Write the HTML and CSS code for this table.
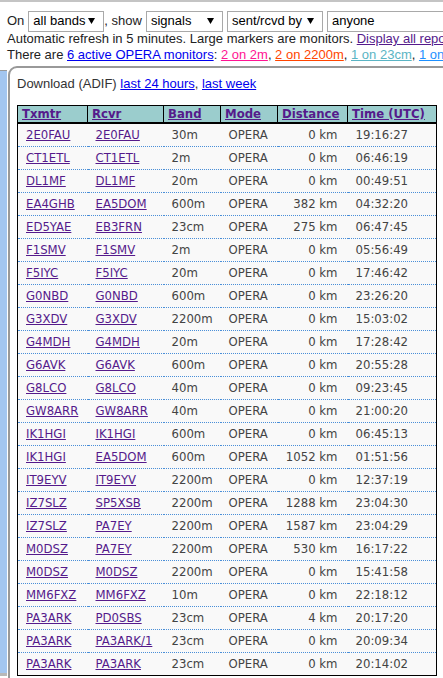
FILE: index.html
```html
<!DOCTYPE html>
<html>
<head>
<meta charset="utf-8">
<title>OPERA reports</title>
<link rel="stylesheet" href="styles.css">
</head>
<body>
<div class="page">
  <div class="top">
    <div class="controls">
      <span>On</span>
      <span class="sel w-bands">all bands<svg class="arr" width="7" height="6" viewBox="0 0 7 6"><path d="M0 0H7L3.5 6Z"/></svg></span><span class="comma">, show</span>
      <span class="sel w-show">signals<svg class="arr" width="7" height="6" viewBox="0 0 7 6"><path d="M0 0H7L3.5 6Z"/></svg></span>
      <span class="sel w-by">sent/rcvd by<svg class="arr" width="7" height="6" viewBox="0 0 7 6"><path d="M0 0H7L3.5 6Z"/></svg></span>
      <span class="inp">anyone</span>
    </div>
    <div class="line">Automatic refresh in 5 minutes. Large markers are monitors. <a class="visited" href="#">Display all reports</a></div>
    <div class="line">There are <a class="blue" href="#">6 active OPERA monitors</a>: <a class="c2m" href="#">2 on 2m</a>, <a class="c2200" href="#">2 on 2200m</a>, <a class="c23" href="#">1 on 23cm</a>, <a class="c600" href="#">1 on 600m</a></div>
  </div>
  <div class="main">
    <div class="side"></div>
    <div class="box">
      <div class="dl">Download (ADIF) <a class="blue" href="#">last 24 hours</a>, <a class="blue" href="#">last week</a></div>
      <table class="spots">
        <colgroup><col class="c1"><col class="c2"><col class="c3"><col class="c4"><col class="c5"><col class="c6"></colgroup>
        <thead>
          <tr><th><a href="#">Txmtr</a></th><th><a href="#">Rcvr</a></th><th><a href="#">Band</a></th><th><a href="#">Mode</a></th><th><a href="#">Distance</a></th><th><a href="#">Time (UTC)</a></th></tr>
        </thead>
        <tbody>
          <tr><td><a href="#">2E0FAU</a></td><td><a href="#">2E0FAU</a></td><td>30m</td><td>OPERA</td><td class="num">0 km</td><td>19:16:27</td></tr>
          <tr><td><a href="#">CT1ETL</a></td><td><a href="#">CT1ETL</a></td><td>2m</td><td>OPERA</td><td class="num">0 km</td><td>06:46:19</td></tr>
          <tr><td><a href="#">DL1MF</a></td><td><a href="#">DL1MF</a></td><td>20m</td><td>OPERA</td><td class="num">0 km</td><td>00:49:51</td></tr>
          <tr><td><a href="#">EA4GHB</a></td><td><a href="#">EA5DOM</a></td><td>600m</td><td>OPERA</td><td class="num">382 km</td><td>04:32:20</td></tr>
          <tr><td><a href="#">ED5YAE</a></td><td><a href="#">EB3FRN</a></td><td>23cm</td><td>OPERA</td><td class="num">275 km</td><td>06:47:45</td></tr>
          <tr><td><a href="#">F1SMV</a></td><td><a href="#">F1SMV</a></td><td>2m</td><td>OPERA</td><td class="num">0 km</td><td>05:56:49</td></tr>
          <tr><td><a href="#">F5IYC</a></td><td><a href="#">F5IYC</a></td><td>20m</td><td>OPERA</td><td class="num">0 km</td><td>17:46:42</td></tr>
          <tr><td><a href="#">G0NBD</a></td><td><a href="#">G0NBD</a></td><td>600m</td><td>OPERA</td><td class="num">0 km</td><td>23:26:20</td></tr>
          <tr><td><a href="#">G3XDV</a></td><td><a href="#">G3XDV</a></td><td>2200m</td><td>OPERA</td><td class="num">0 km</td><td>15:03:02</td></tr>
          <tr><td><a href="#">G4MDH</a></td><td><a href="#">G4MDH</a></td><td>20m</td><td>OPERA</td><td class="num">0 km</td><td>17:28:42</td></tr>
          <tr><td><a href="#">G6AVK</a></td><td><a href="#">G6AVK</a></td><td>600m</td><td>OPERA</td><td class="num">0 km</td><td>20:55:28</td></tr>
          <tr><td><a href="#">G8LCO</a></td><td><a href="#">G8LCO</a></td><td>40m</td><td>OPERA</td><td class="num">0 km</td><td>09:23:45</td></tr>
          <tr><td><a href="#">GW8ARR</a></td><td><a href="#">GW8ARR</a></td><td>40m</td><td>OPERA</td><td class="num">0 km</td><td>21:00:20</td></tr>
          <tr><td><a href="#">IK1HGI</a></td><td><a href="#">IK1HGI</a></td><td>600m</td><td>OPERA</td><td class="num">0 km</td><td>06:45:13</td></tr>
          <tr><td><a href="#">IK1HGI</a></td><td><a href="#">EA5DOM</a></td><td>600m</td><td>OPERA</td><td class="num">1052 km</td><td>01:51:56</td></tr>
          <tr><td><a href="#">IT9EYV</a></td><td><a href="#">IT9EYV</a></td><td>2200m</td><td>OPERA</td><td class="num">0 km</td><td>12:37:19</td></tr>
          <tr><td><a href="#">IZ7SLZ</a></td><td><a href="#">SP5XSB</a></td><td>2200m</td><td>OPERA</td><td class="num">1288 km</td><td>23:04:30</td></tr>
          <tr><td><a href="#">IZ7SLZ</a></td><td><a href="#">PA7EY</a></td><td>2200m</td><td>OPERA</td><td class="num">1587 km</td><td>23:04:29</td></tr>
          <tr><td><a href="#">M0DSZ</a></td><td><a href="#">PA7EY</a></td><td>2200m</td><td>OPERA</td><td class="num">530 km</td><td>16:17:22</td></tr>
          <tr><td><a href="#">M0DSZ</a></td><td><a href="#">M0DSZ</a></td><td>2200m</td><td>OPERA</td><td class="num">0 km</td><td>15:41:58</td></tr>
          <tr><td><a href="#">MM6FXZ</a></td><td><a href="#">MM6FXZ</a></td><td>10m</td><td>OPERA</td><td class="num">0 km</td><td>22:18:12</td></tr>
          <tr><td><a href="#">PA3ARK</a></td><td><a href="#">PD0SBS</a></td><td>23cm</td><td>OPERA</td><td class="num">4 km</td><td>20:17:20</td></tr>
          <tr><td><a href="#">PA3ARK</a></td><td><a href="#">PA3ARK/1</a></td><td>23cm</td><td>OPERA</td><td class="num">0 km</td><td>20:09:34</td></tr>
          <tr><td><a href="#">PA3ARK</a></td><td><a href="#">PA3ARK</a></td><td>23cm</td><td>OPERA</td><td class="num">0 km</td><td>20:14:02</td></tr>
        </tbody>
      </table>
    </div>
  </div>
</div>
</body>
</html>
```

FILE: styles.css
```css
html, body {
  margin: 0;
  padding: 0;
  overflow: hidden;
  background: #fff;
}
.page {
  border-top: 2px solid #c4c4c4;
  font-family: "Liberation Sans", Arial, sans-serif;
  font-size: 13px;
  color: #222;
  width: 443px;
  height: 676px;
  overflow: hidden;
}
.top {
  padding: 9px 0 0 7px;
  white-space: nowrap;
}
.controls {
  display: flex;
  align-items: center;
  height: 20px;
  line-height: 16px;
}
.controls > span {
  flex: none;
}
.controls .sel, .controls .inp {
  box-sizing: border-box;
  height: 21px;
  border: 1px solid #a9a9a9;
  background: #fff;
  display: inline-flex;
  align-items: center;
  justify-content: space-between;
  padding: 0 8px 0 4px;
  color: #000;
}
.controls .sel { margin-left: 4px; }
.w-bands { width: 76px; }
.w-show { width: 77px; }
.w-by { width: 96px; }
.controls .inp {
  margin-left: 4px;
  width: 140px;
  justify-content: flex-start;
}
.arr { fill: #000; }
.line {
  line-height: 16px;
}
a { text-decoration: underline; }
a.visited { color: #551a8b; }
a.blue { color: #0000ee; }
a.c2m { color: #ff1493; }
a.c2200 { color: #ff4500; }
a.c23 { color: #5ab4c4; }
a.c600 { color: #1e90ff; }

.main {
  display: flex;
  margin-top: 3px;
}
.side {
  width: 7px;
  flex: none;
  margin-top: 4px;
  height: 602px;
  background: #a3c6f0;
  border-top: 1px solid #999;
  border-bottom: 3px solid #b8b8b8;
}
.box {
  flex: none;
  width: 440px;
  margin-left: 1px;
  border: 2px solid #999;
  border-radius: 9px 0 0 0;
  padding: 8px 7px 8px 7px;
  background: #fff;
}
.dl {
  color: #333;
  line-height: 16px;
}
.spots {
  margin-top: 13px;
  border-collapse: collapse;
  table-layout: fixed;
  width: 420px;
  border: 1px solid #000;
  background: #f9f9f9;
  font-family: "DejaVu Sans Condensed", "DejaVu Sans", sans-serif;
  font-size: 13px;
  color: #444;
}
col.c1 { width: 70px; }
col.c2 { width: 76px; }
col.c3 { width: 57px; }
col.c4 { width: 57px; }
col.c5 { width: 70px; }
col.c6 { width: 89px; }
.spots th {
  background: #9bcdcd;
  border: 1px solid #000;
  border-bottom: 2px solid #000;
  height: 16px;
  padding: 0 4px;
  text-align: left;
  font-weight: bold;
  line-height: 16px;
}
.spots th a { color: #551a8b; }
.spots td {
  height: 22px;
  padding: 0 7px 0 8px;
  border-bottom: 1px dotted #4a8fd8;
  white-space: nowrap;
  line-height: 16px;
}
.spots td a { color: #551a8b; }
.spots td.num { text-align: right; padding-right: 10px; }
.spots tbody tr:last-child td { border-bottom: 1px solid #000; }
```
